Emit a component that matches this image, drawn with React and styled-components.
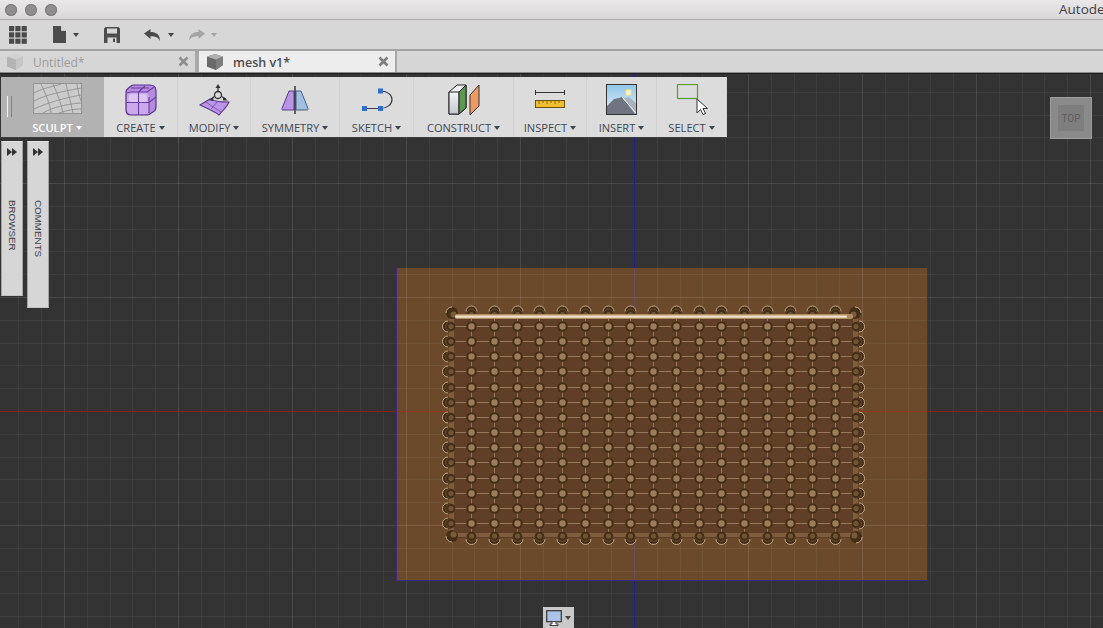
import styled, { createGlobalStyle } from "styled-components";

const GlobalStyle = createGlobalStyle`
  html, body {
    margin: 0;
    padding: 0;
    background: #333;
  }
`;

const Page = styled.div`
  position: relative;
  display: flex;
  flex-direction: column;
  width: 1103px;
  height: 628px;
  overflow: hidden;
  font-family: "Open Sans", "Liberation Sans", sans-serif;
`;

const TitleBar = styled.div`
  display: flex;
  align-items: center;
  gap: 8px;
  height: 19px;
  padding-left: 5px;
  flex: none;
  background: linear-gradient(#e9e7e8, #d9d7d8);
  border-bottom: 1px solid #a9a9a9;
`;

const Light = styled.span`
  flex: none;
  width: 12px;
  height: 12px;
  border-radius: 50%;
  background: #8e8e8e;
  box-shadow: inset 0 0 0 1px #7c7c7c;
`;

const AppName = styled.span`
  margin-left: 994px;
  font-size: 13.5px;
  line-height: 19px;
  color: #3f3f46;
  white-space: nowrap;
`;

const QuickBar = styled.div`
  display: flex;
  align-items: center;
  height: 29px;
  flex: none;
  padding-left: 9px;
  background: #d7d7d7;
  border-bottom: 2px solid #a3a3a3;
`;

const QuickButton = styled.button`
  display: flex;
  align-items: center;
  gap: ${(p) => p.$inner || 6}px;
  margin: 0 0 0 ${(p) => p.$gap}px;
  padding: 0;
  border: 0;
  background: none;
`;

const Caret = styled.span`
  width: 0;
  height: 0;
  border-left: 3.5px solid transparent;
  border-right: 3.5px solid transparent;
  border-top: 4px solid ${(p) => p.$color || "#444"};
`;

const TabBar = styled.div`
  display: flex;
  height: 21px;
  flex: none;
  background: #d6d6d6;
  border-bottom: 1px solid #8c8c8c;
`;

const Tab = styled.div`
  display: flex;
  align-items: center;
  width: ${(p) => p.$width}px;
  padding-left: ${(p) => p.$pad}px;
  box-sizing: border-box;
  background: ${(p) => (p.$active ? "#ededed" : "#d6d6d6")};
  border-left: ${(p) => (p.$active ? "2px solid #a8a8a8" : "0")};
  border-right: 2px solid #a8a8a8;
`;

const TabTitle = styled.span`
  flex: 1;
  margin-left: 10px;
  padding-top: 1px;
  font-size: ${(p) => (p.$active ? 12.5 : 12)}px;
  font-weight: ${(p) => (p.$active ? 600 : 400)};
  color: ${(p) => (p.$active ? "#4c4c4c" : "#9c9c9c")};
`;

const TabClose = styled.span`
  margin-right: 6px;
  display: flex;
`;

const Viewport = styled.div`
  position: relative;
  flex: 1;
  background: #333;
  border-top: 1px solid #1d1d1d;
`;

const Scene = styled.svg`
  display: block;
`;

const Ribbon = styled.div`
  position: absolute;
  top: 3px;
  left: 1px;
  display: flex;
  height: 60px;
  background: #dcdcdc;
`;

const RibbonGroup = styled.div`
  display: flex;
  flex-direction: column;
  align-items: center;
  width: ${(p) => p.$width}px;
  height: 100%;
  box-sizing: border-box;
  padding-left: ${(p) => (p.$active ? 10 : 0)}px;
  background: ${(p) => (p.$active ? "#b2b2b2" : "transparent")};
  border-right: 1px solid ${(p) => (p.$active ? "#b2b2b2" : "#d2d2d2")};
`;

const IconSlot = styled.div`
  display: flex;
  align-items: center;
  justify-content: center;
  height: 43px;
  width: 100%;
  box-sizing: border-box;
  padding-top: ${(p) => (p.$active ? 0 : 2)}px;
`;

const GroupLabel = styled.div`
  display: flex;
  align-items: center;
  gap: 3px;
  font-size: 11.1px;
  line-height: 15px;
  font-weight: ${(p) => (p.$active ? 600 : 400)};
  color: ${(p) => (p.$active ? "#fff" : "#3f4650")};
  white-space: nowrap;
`;

const Grip = styled.span`
  position: absolute;
  left: 6px;
  top: 19px;
  width: 3px;
  height: 21px;
  border-left: 1px solid #f2f2f2;
  border-right: 1px solid #808080;
`;

const SideTab = styled.div`
  position: absolute;
  top: 67px;
  left: ${(p) => p.$left}px;
  width: 22px;
  height: ${(p) => p.$height}px;
  box-sizing: border-box;
  padding-top: 6px;
  background: #d6d6d6;
  border: 1px solid #a4a4a4;
  border-top-color: #e2e2e2;
  border-bottom-color: #c4c4c4;
  display: flex;
  flex-direction: column;
  align-items: center;
`;

const SideLabel = styled.span`
  margin-top: ${(p) => p.$top}px;
  writing-mode: vertical-rl;
  font-family: "Liberation Sans", sans-serif;
  font-size: 9.8px;
  line-height: 12px;
  color: #3c3f46;
`;

const NavCube = styled.div`
  position: absolute;
  top: 23px;
  left: 1050px;
  width: 42px;
  height: 42px;
  box-sizing: border-box;
  padding: 7px;
  background: #8a8a8a;
  border: 1px solid #9d9d9d;
`;

const CubeFace = styled.div`
  display: flex;
  align-items: center;
  justify-content: center;
  height: 100%;
  background: #7e7e7e;
  font-family: "Roboto", "Liberation Sans", sans-serif;
  font-size: 10px;
  color: #5f5f5f;
`;

const DisplayButton = styled.div`
  position: absolute;
  left: 543px;
  bottom: 0;
  display: flex;
  align-items: center;
  gap: 3px;
  width: 31px;
  height: 21px;
  padding-left: 3px;
  box-sizing: border-box;
  background: #c9c9c9;
`;

const AppsIcon = () => (
  <svg width="18" height="18" viewBox="0 0 18 18">
    {[0, 6.3, 12.6].flatMap((x) =>
      [0, 6.3, 12.6].map((y) => <rect key={`${x}-${y}`} x={x} y={y} width="5.2" height="5.2" fill="#4a4a4a" />)
    )}
  </svg>
);

const DocIcon = () => (
  <svg width="14" height="17" viewBox="0 0 14 17">
    <path d="M0 0h8l5 5v12H0z" fill="#4c4c4c" />
    <path d="M8.5 0v4.5H13" fill="#d7d7d7" stroke="#d7d7d7" strokeWidth=".8" />
  </svg>
);

const SaveIcon = () => (
  <svg width="16" height="16" viewBox="0 0 16 16">
    <path d="M0 1.5 1.5 0h13L16 1.5V16H0z" fill="#4c4c4c" />
    <rect x="3" y="1.5" width="10" height="5" fill="#d7d7d7" />
    <rect x="3.5" y="10.5" width="9" height="5.5" fill="#d7d7d7" />
    <rect x="9" y="11.5" width="2" height="3.5" fill="#4c4c4c" />
  </svg>
);

const ArrowIcon = ({ color, flip }) => (
  <svg width="16" height="12" viewBox="0 0 16 12" style={flip ? { transform: "scaleX(-1)" } : undefined}>
    <path d="M0 4.5 6.5 0v3C12 3 16 5.500 16 12c-1.500-3.500-4.500-4.800-9.500-4.800V10z" fill={color} />
  </svg>
);

const TabCube = ({ faded }) => (
  <svg width="16" height="16" viewBox="0 0 16 16">
    <path d="M8 0 16 2.500V11L9 16 0 12.500V2.500z" fill={faded ? "#c6c6c6" : "#8b8b8b"} />
    <path d="M0 2.500 9 5.500V16L0 12.500z" fill={faded ? "#b4b4b4" : "#6a6a6a"} />
    <path d="M0 2.500 8 0 16 2.500 9 5.500z" fill={faded ? "#d2d2d2" : "#b0b0b0"} />
    <path d="M9 5.500 16 2.500V11L9 16z" fill={faded ? "#c6c6c6" : "#7d7d7d"} />
  </svg>
);

const CloseIcon = ({ color }) => (
  <svg width="11" height="11" viewBox="0 0 11 11">
    <path d="M1.500 1.500 9.500 9.500M9.500 1.500 1.500 9.500" stroke={color} strokeWidth="2.600" />
  </svg>
);

const SculptIcon = () => (
  <svg width="49" height="31" viewBox="0 0 49 31" fill="none">
    <rect x=".5" y=".5" width="48" height="30" fill="#cbcbcb" stroke="#949494" />
    <g stroke="#8a8a8a" strokeWidth=".8">
      <path d="M1 10C12 4 20 4 28 1" />
      <path d="M1 18C14 11 28 9 48 5" />
      <path d="M1 26C16 19 32 15 48 12" />
      <path d="M10 30C20 24 34 21 48 20" />
      <path d="M26 30C34 27 42 26 48 26" />
      <path d="M8 1C12 10 17 20 18 30" />
      <path d="M20 1C24 10 28 20 30 30" />
      <path d="M33 1C35 10 38 20 40 30" />
      <path d="M44 1C45 8 46 12 48 18" />
    </g>
  </svg>
);

const CreateIcon = () => (
  <svg width="32" height="32" viewBox="0 0 32 32">
    <path d="M9 1H25C29 1 31 3 31 7V23C31 25 30 27 28 28L24 30.500C23 31 22 31 20 31H6C3 31 1 29 1 26V9C1 7 2 5 3 4.500L6 2C7 1 8 1 9 1Z" fill="#b58be0" stroke="#57348a" strokeWidth="1.200" />
    <path d="M5 8H19C22 8 24 10 24 13V27C24 29 22 30 20 30H6C4 30 2 28 2 26V11C2 9 3 8 5 8Z" fill="#c9a8ec" />
    <rect x="4" y="10" width="18" height="8" rx="3" fill="#dcc7f4" />
    <g stroke="#6a3fa0" strokeWidth="1.100" fill="none">
      <path d="M2 18.500H24L31 13" />
      <path d="M13.500 8V31" />
      <path d="M6 4 24 4M13.500 8 20 2" />
      <path d="M2 9 6 8H22L30 2.500M24 13V29" />
    </g>
  </svg>
);

const ModifyIcon = () => (
  <svg width="31" height="32" viewBox="0 0 31 32" fill="none">
    <path d="M1 21 11 15C15 18 22 18 30 18C28 23 24 26 20 31C15 27 7 24 1 21Z" fill="#bb95e6" stroke="#5a3a8c" strokeWidth="1.100" />
    <path d="M7 18C12 22 18 25 22 28M12 25 19 17" stroke="#6d4aa0" strokeWidth=".8" />
    <circle cx="19" cy="11" r="3.500" stroke="#333" strokeWidth="1.300" />
    <path d="M19 7.500V3M15.500 12.500 12 15M22.500 12.500 27 15" stroke="#333" strokeWidth="1.300" />
    <path d="M19 0 21.500 4H16.500ZM10 16.500 14 13 14.500 16.500ZM29 16.500 24 13 24 16.500Z" fill="#333" />
  </svg>
);

const SymmetryIcon = () => (
  <svg width="28" height="28" viewBox="0 0 28 28">
    <path d="M13 5H8L1 22.500C.7 23.500 1 24 2 24H13Z" fill="#b993e6" stroke="#5a3a8c" />
    <path d="M15 5H20L27 22.500C27.300 23.500 27 24 26 24H15Z" fill="#9fc0e2" stroke="#4d5e78" />
    <path d="M14 0V28" stroke="#1c1c1c" strokeWidth="1.300" />
  </svg>
);

const SketchIcon = () => (
  <svg width="33" height="24" viewBox="0 0 33 24" fill="none">
    <path d="M4.500 20.500H20C27 20.500 32 16.500 32 11.500C32 6.500 27 3 20 3" stroke="#3c3c3c" strokeWidth="1.200" />
    <rect x="2" y="18" width="5" height="5" fill="#2f6fd0" />
    <rect x="18" y="18" width="5" height="5" fill="#2f6fd0" />
    <rect x="18" y=".5" width="5" height="5" fill="#2f6fd0" />
  </svg>
);

const ConstructIcon = () => (
  <svg width="32" height="32" viewBox="0 0 32 32">
    <defs>
      <linearGradient id="boxFace" x1="0" y1="0" x2="0" y2="1">
        <stop offset="0" stopColor="#f2f4f6" />
        <stop offset="1" stopColor="#c4c9cf" />
      </linearGradient>
    </defs>
    <path d="M1 8 9 1H18V24L11 30H1Z" fill="#eef0f2" stroke="#222" />
    <path d="M1 8H11V30H1Z" fill="url(#boxFace)" stroke="#222" />
    <path d="M11 8 18 1V24L11 30Z" fill="#5a9a4d" stroke="#222" />
    <path d="M22 11 31 1V22L22 31Z" fill="#ee9a62" stroke="#333" />
  </svg>
);

const InspectIcon = () => (
  <svg width="30" height="19" viewBox="0 0 30 19" fill="none">
    <path d="M.5 0V5M29.500 0V5M.5 2.500H29.500" stroke="#333" />
    <rect x=".5" y="10.500" width="29" height="7" fill="#f2bd2c" stroke="#6b5314" />
    <path d="M4 11V14M8 11V13M12 11V14M16 11V13M20 11V14M24 11V13" stroke="#8a6a14" />
  </svg>
);

const InsertIcon = () => (
  <svg width="31" height="31" viewBox="0 0 31 31">
    <defs>
      <linearGradient id="sky" x1="0" y1="0" x2="0" y2="1">
        <stop offset="0" stopColor="#8fc6ea" />
        <stop offset="1" stopColor="#e8f2f6" />
      </linearGradient>
    </defs>
    <rect x=".5" y=".5" width="30" height="30" fill="url(#sky)" stroke="#333" />
    <rect x="20" y="6" width="5" height="5" fill="#fff6c8" stroke="#f4e08a" />
    <path d="M18 14 23 13 30 19V30H24Z" fill="#aab3bb" />
    <path d="M1 30V22L8 15 13 14 16 13 29 30Z" fill="#6f7480" />
    <path d="M16 13 30 29" stroke="#f4f6f8" />
  </svg>
);

const SelectIcon = () => (
  <svg width="32" height="31" viewBox="0 0 32 31" fill="none">
    <rect x="1.500" y=".5" width="20" height="14" stroke="#5f9a2e" strokeWidth="1.200" />
    <path d="M21 15V29L24.500 25.500 27 30.500 29.500 29.500 27 24.500 31.500 24.500Z" fill="#fff" stroke="#333" />
  </svg>
);

const ForwardIcon = () => (
  <svg width="10" height="8" viewBox="0 0 10 8">
    <path d="M0 0 5 4 0 8ZM5 0 10 4 5 8Z" fill="#333" />
  </svg>
);

const DisplayIcon = () => (
  <svg width="16" height="16" viewBox="0 0 16 16">
    <rect x=".7" y=".7" width="14.600" height="11" fill="#a9c4e6" stroke="#3d3d3d" strokeWidth="1.300" />
    <path d="M6 12V14H4V15.500H12V14H10V12" fill="#fff" stroke="#3d3d3d" />
  </svg>
);

const groups = [
  { name: "SCULPT", width: 103, icon: <SculptIcon />, active: true },
  { name: "CREATE", width: 74, icon: <CreateIcon /> },
  { name: "MODIFY", width: 73, icon: <ModifyIcon /> },
  { name: "SYMMETRY", width: 89, icon: <SymmetryIcon /> },
  { name: "SKETCH", width: 74, icon: <SketchIcon /> },
  { name: "CONSTRUCT", width: 100, icon: <ConstructIcon /> },
  { name: "INSPECT", width: 73, icon: <InspectIcon /> },
  { name: "INSERT", width: 70, icon: <InsertIcon /> },
  { name: "SELECT", width: 70, icon: <SelectIcon /> },
];

const range = (start, step, count) => Array.from({ length: count }, (_, i) => start + i * step);

const gridX = range(64 - 22.8 * 2, 22.8, 50).map(Math.round);
const gridY = range(69, 22.8, 26).map(Math.round);
const majorX = (i) => (i - 2) % 5 === 0;
const majorY = (i) => i % 5 === 0;

const meshX = range(471, 22.75, 17).map((x) => Math.round(x) + 0.5);
const meshY = range(326, 15.15, 14).map((y) => Math.round(y) + 0.5);

const DARK = "#452d16";
const CREAM = "#cdb491";
const TAN = "#6f5436";
const NODE = "#9c7d5a";
const WIRE = "#97795a";

const rim = (r, cy) => `M${-r} ${cy}A${r} ${r} 0 0 1 ${r} ${cy}`;

// control point on the border, drawn pointing up and turned to face outward
const EdgeNode = ({ x, y, angle }) => (
  <g transform={`translate(${x} ${y}) rotate(${angle})`}>
    <circle cy="-3" r="5.500" fill={DARK} />
    <path d={rim(5.5, -3)} fill="none" stroke={CREAM} strokeWidth=".9" />
    <circle cy="-.5" r="4.800" fill={DARK} />
    <path d={rim(4.8, -0.5)} fill="none" stroke={TAN} strokeWidth=".8" />
    <circle r="2.600" fill={TAN} />
  </g>
);

const CornerNode = ({ x, y, angle }) => (
  <g transform={`translate(${x} ${y}) rotate(${angle})`}>
    <circle r="6" fill={DARK} />
    <path d="M-6 0A6 6 0 0 1 0 -6" fill="none" stroke={CREAM} strokeWidth=".9" />
    <circle cx="1.500" cy="1.500" r="3" fill="#7a5b3a" />
  </g>
);

function MeshScene() {
  return (
    <Scene width="1103" height="554" viewBox="0 74 1103 554">
      <defs>
        <filter id="soft" x="-5%" y="-5%" width="110%" height="110%">
          <feGaussianBlur stdDeviation=".45" />
        </filter>
      </defs>
      <rect x="396" y="268" width="531" height="312" fill="#6a4a2b" />
      <g shapeRendering="crispEdges">
        {gridX.map((x, i) => (
          <path key={x} d={`M${x + 0.5} 74V628`} stroke="#ffffff" strokeOpacity={majorX(i) ? 0.11 : 0.05} />
        ))}
        {gridY.map((y, i) => (
          <path key={y} d={`M0 ${y + 0.5}H1103`} stroke="#ffffff" strokeOpacity={majorY(i) ? 0.11 : 0.05} />
        ))}
        <path d="M0 411.500H396" stroke="#8c1f1a" />
        <path d="M396 411.500H927" stroke="#8f3a1e" />
        <path d="M927 411.500H1103" stroke="#8c1f1a" />
        <path d="M634.500 74V268M634.500 580V628" stroke="#1f1f96" />
        <path d="M634.500 268V580" stroke="#56407c" strokeOpacity=".5" />
        <path d="M396.500 268V580.500H927.500V268" fill="none" stroke="#3b2a86" strokeWidth="1" />
      </g>

      <g filter="url(#soft)">
        <rect x="449" y="314" width="409" height="224" fill="#5f4126" />
        <rect x="449" y="314" width="5" height="224" fill="#8a6a48" opacity=".7" />
        <rect x="853" y="314" width="5" height="224" fill="#8a6a48" opacity=".7" />
        <rect x="449" y="533" width="409" height="4" fill="#8a6a48" opacity=".7" />

        {meshY.map((y) => (
          <path key={y} d={`M449 ${y}H858`} stroke={WIRE} />
        ))}
        {meshX.map((x) => (
          <path key={x} d={`M${x} 316V538`} stroke={WIRE} />
        ))}

        {meshX.map((x) => (
          <EdgeNode key={x} x={x} y={314.5} angle={0} />
        ))}
        {meshX.map((x) => (
          <EdgeNode key={x} x={x} y={536} angle={180} />
        ))}
        {meshY.map((y) => (
          <EdgeNode key={y} x={451} y={y} angle={-90} />
        ))}
        {meshY.map((y) => (
          <EdgeNode key={y} x={856} y={y} angle={90} />
        ))}
        <CornerNode x={452} y={313} angle={0} />
        <CornerNode x={855} y={313} angle={90} />
        <CornerNode x={452} y={536} angle={-90} />
        <CornerNode x={856} y={537} angle={180} />

        {meshX.flatMap((x) =>
          meshY.map((y) => (
            <g key={`${x}-${y}`}>
              <circle cx={x} cy={y} r="5.200" fill={DARK} />
              <circle cx={x} cy={y} r="3.200" fill={NODE} />
            </g>
          ))
        )}

        <rect x="455" y="314" width="398" height="5" rx="2" fill="#b08f68" />
        <rect x="455" y="315.500" width="392" height="2.200" rx="1" fill="#f2e2c8" />
      </g>
    </Scene>
  );
}

export default function App() {
  return (
    <Page>
      <GlobalStyle />
      <TitleBar>
        <Light />
        <Light />
        <Light />
        <AppName>Autode</AppName>
      </TitleBar>

      <QuickBar>
        <AppsIcon />
        <QuickButton $gap={26}>
          <DocIcon />
          <Caret />
        </QuickButton>
        <QuickButton $gap={25}>
          <SaveIcon />
        </QuickButton>
        <QuickButton $gap={24} $inner={8}>
          <ArrowIcon color="#4c4c4c" />
          <Caret />
        </QuickButton>
        <QuickButton $gap={15}>
          <ArrowIcon color="#a5a5a5" flip />
          <Caret $color="#a5a5a5" />
        </QuickButton>
      </QuickBar>

      <TabBar>
        <Tab $width={197} $pad={7}>
          <TabCube faded />
          <TabTitle>Untitled*</TabTitle>
          <TabClose>
            <CloseIcon color="#8f8f8f" />
          </TabClose>
        </Tab>
        <Tab $active $width={200} $pad={8}>
          <TabCube />
          <TabTitle $active>mesh v1*</TabTitle>
          <TabClose>
            <CloseIcon color="#7e7e7e" />
          </TabClose>
        </Tab>
      </TabBar>

      <Viewport>
        <MeshScene />

        <Ribbon>
          <Grip />
          {groups.map((g) => (
            <RibbonGroup key={g.name} $width={g.width} $active={g.active}>
              <IconSlot $active={g.active}>{g.icon}</IconSlot>
              <GroupLabel $active={g.active}>
                {g.name}
                <Caret $color={g.active ? "#fff" : "#3f4650"} />
              </GroupLabel>
            </RibbonGroup>
          ))}
        </Ribbon>

        <SideTab $left={1} $height={155}>
          <ForwardIcon />
          <SideLabel $top={44}>BROWSER</SideLabel>
        </SideTab>
        <SideTab $left={27} $height={167}>
          <ForwardIcon />
          <SideLabel $top={44}>COMMENTS</SideLabel>
        </SideTab>

        <NavCube>
          <CubeFace>TOP</CubeFace>
        </NavCube>

        <DisplayButton>
          <DisplayIcon />
          <Caret $color="#444" />
        </DisplayButton>
      </Viewport>
    </Page>
  );
}
